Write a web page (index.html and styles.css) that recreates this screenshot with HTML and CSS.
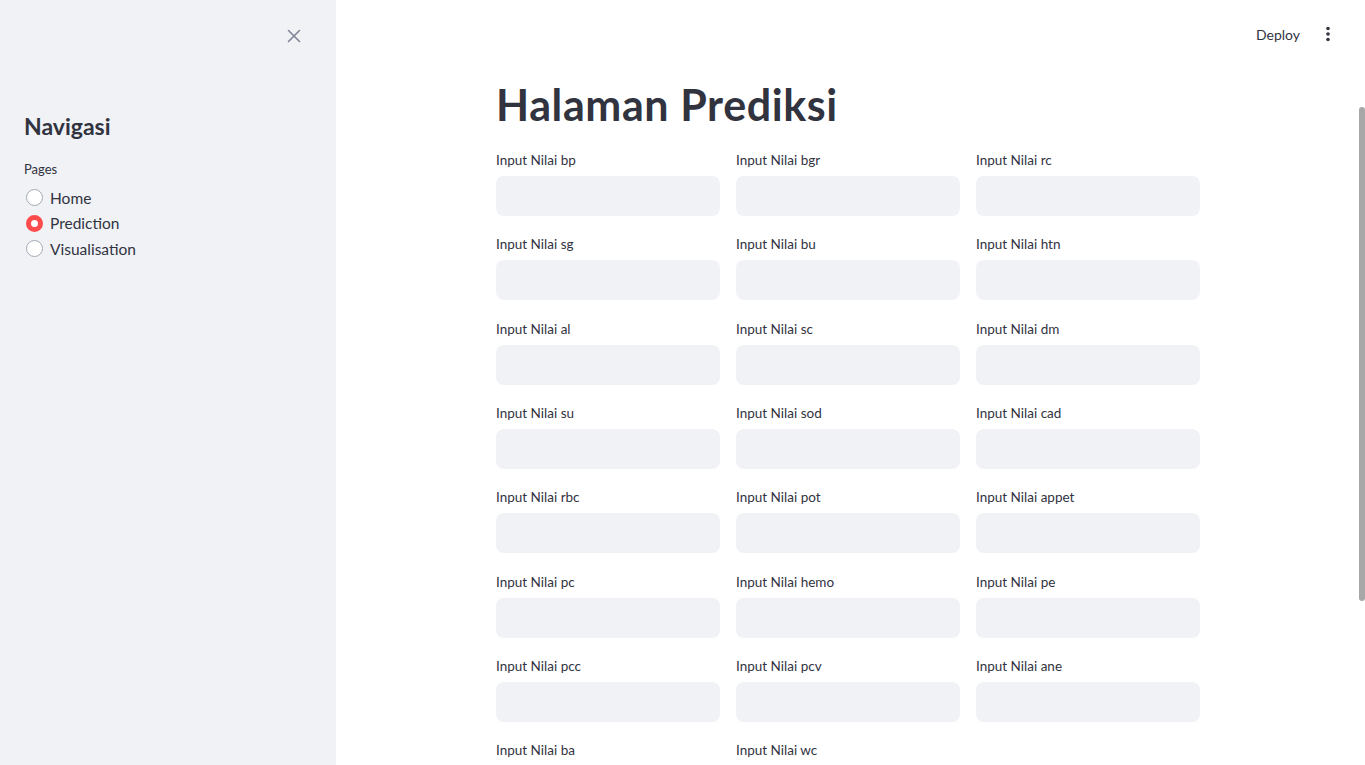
FILE: index.html
```html
<!DOCTYPE html>
<html lang="id">
<head>
<meta charset="utf-8">
<title>Halaman Prediksi</title>
<link rel="stylesheet" href="styles.css">
</head>
<body>
<div class="app">
  <aside class="sidebar">
    <div class="sidebar-top">
      <button class="close-btn" aria-label="Close sidebar">
        <svg width="16" height="16" viewBox="0 0 16 16"><path d="M2.5 2.5 L13.5 13.5 M13.5 2.5 L2.5 13.5" stroke="#808495" stroke-width="1.6" fill="none" stroke-linecap="round"/></svg>
      </button>
    </div>
    <div class="sidebar-content">
      <h2 class="side-title">Navigasi</h2>
      <div class="radio-label">Pages</div>
      <div class="radio-group">
        <label class="radio"><span class="dot"></span><span>Home</span></label>
        <label class="radio checked"><span class="dot"></span><span>Prediction</span></label>
        <label class="radio"><span class="dot"></span><span>Visualisation</span></label>
      </div>
    </div>
  </aside>
  <main class="main">
    <header class="topbar">
      <span class="deploy">Deploy</span>
      <span class="kebab" aria-label="Menu">
        <svg width="4" height="16" viewBox="0 0 4 16"><circle cx="2" cy="2.5" r="1.8" fill="#31333f"/><circle cx="2" cy="8" r="1.8" fill="#31333f"/><circle cx="2" cy="13.5" r="1.8" fill="#31333f"/></svg>
      </span>
    </header>
    <div class="block">
      <h1 class="title">Halaman Prediksi</h1>
      <div class="grid">
        <div class="field"><label>Input Nilai bp</label><div class="input"></div></div>
        <div class="field"><label>Input Nilai bgr</label><div class="input"></div></div>
        <div class="field"><label>Input Nilai rc</label><div class="input"></div></div>
        <div class="field"><label>Input Nilai sg</label><div class="input"></div></div>
        <div class="field"><label>Input Nilai bu</label><div class="input"></div></div>
        <div class="field"><label>Input Nilai htn</label><div class="input"></div></div>
        <div class="field"><label>Input Nilai al</label><div class="input"></div></div>
        <div class="field"><label>Input Nilai sc</label><div class="input"></div></div>
        <div class="field"><label>Input Nilai dm</label><div class="input"></div></div>
        <div class="field"><label>Input Nilai su</label><div class="input"></div></div>
        <div class="field"><label>Input Nilai sod</label><div class="input"></div></div>
        <div class="field"><label>Input Nilai cad</label><div class="input"></div></div>
        <div class="field"><label>Input Nilai rbc</label><div class="input"></div></div>
        <div class="field"><label>Input Nilai pot</label><div class="input"></div></div>
        <div class="field"><label>Input Nilai appet</label><div class="input"></div></div>
        <div class="field"><label>Input Nilai pc</label><div class="input"></div></div>
        <div class="field"><label>Input Nilai hemo</label><div class="input"></div></div>
        <div class="field"><label>Input Nilai pe</label><div class="input"></div></div>
        <div class="field"><label>Input Nilai pcc</label><div class="input"></div></div>
        <div class="field"><label>Input Nilai pcv</label><div class="input"></div></div>
        <div class="field"><label>Input Nilai ane</label><div class="input"></div></div>
        <div class="field"><label>Input Nilai ba</label><div class="input"></div></div>
        <div class="field"><label>Input Nilai wc</label><div class="input"></div></div>
      </div>
    </div>
    <div class="scrollbar"></div>
  </main>
</div>
</body>
</html>
```
FILE: styles.css
```css
* { box-sizing: border-box; }
html, body { margin: 0; height: 100%; overflow: hidden; }
body {
  font-family: Lato, "Open Sans", sans-serif;
  color: #31333f;
  background: #fff;
}
.app { display: flex; height: 765px; }
.sidebar {
  width: 336px;
  flex: none;
  background: #f0f2f6;
  display: flex;
  flex-direction: column;
}
.sidebar-top {
  display: flex;
  justify-content: flex-end;
  padding: 26px 32px 0 0;
  height: 60px;
  flex: none;
}
.close-btn {
  border: 0;
  background: transparent;
  width: 20px;
  height: 20px;
  padding: 2px;
  display: flex;
  align-items: center;
  justify-content: center;
}
.sidebar-content { padding: 51px 24px 0 24px; }
.side-title {
  margin: 0;
  font-size: 23px;
  font-weight: 700;
  line-height: 30px;
  height: 30px;
}
.radio-label {
  font-size: 13px;
  margin-top: 18px;
  line-height: 20px;
  height: 20px;
}
.radio-group { display: flex; flex-direction: column; margin-top: 6px; }
.radio {
  display: flex;
  align-items: center;
  gap: 7px;
  height: 25.5px;
  font-size: 15.5px;
}
.dot {
  width: 17px;
  height: 17px;
  border-radius: 50%;
  border: 1px solid #a3a8b4;
  background: #fff;
  margin-left: 2px;
  flex: none;
}
.radio.checked .dot {
  border: 5px solid #ff4b4b;
  background: #fff;
}
.main { flex: 1; position: relative; display: flex; flex-direction: column; overflow: hidden; }
.topbar {
  flex: none;
  height: 68px;
  display: flex;
  align-items: center;
  justify-content: flex-end;
  padding: 0 35px 0 0;
}
.deploy { font-size: 14px; margin-right: 26px; }
.kebab { display: flex; align-items: center; }
.block {
  flex: none;
  width: 704px;
  margin-left: 160px;
}
.title {
  margin: 12px 0 0 0;
  font-size: 43px;
  font-weight: 700;
  line-height: 50px;
  height: 68px;
  letter-spacing: 0.6px;
}
.grid {
  display: grid;
  grid-template-columns: repeat(3, 1fr);
  column-gap: 16px;
  row-gap: 16.33px;
}
.field { display: flex; flex-direction: column; }
.field label {
  font-size: 13.5px;
  line-height: 24px;
  height: 24px;
  margin-bottom: 4px;
}
.input {
  height: 40px;
  background: #f0f2f6;
  border-radius: 8px;
}
.scrollbar {
  position: absolute;
  right: 0;
  top: 107px;
  width: 6px;
  height: 494px;
  border-radius: 3px;
  background: #a8a8a8;
}
```
